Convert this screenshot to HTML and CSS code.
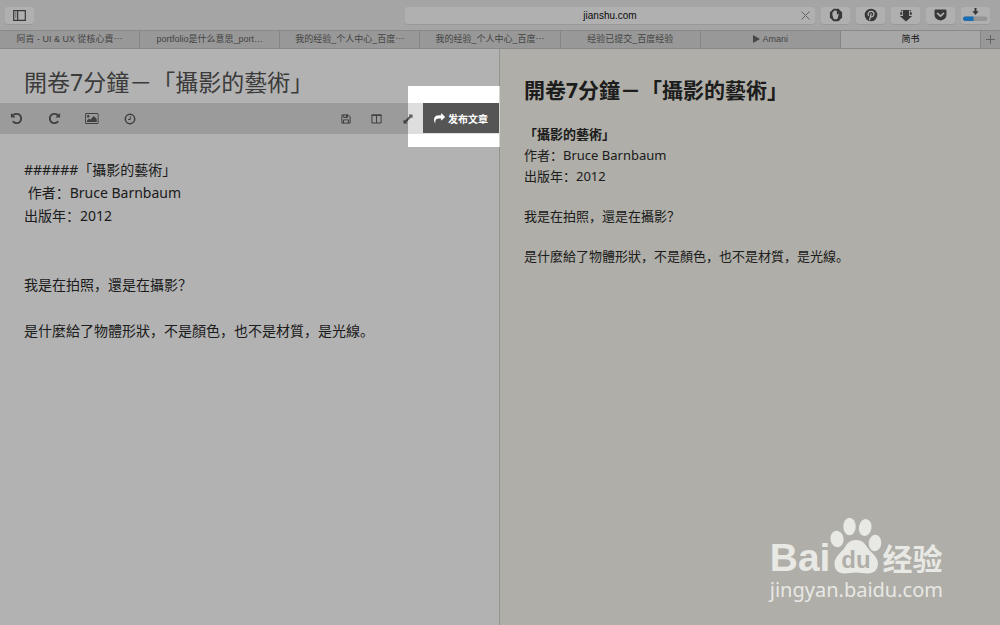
FILE: index.html
```html
<!DOCTYPE html>
<html lang="zh-CN">

<head>
    <meta charset="UTF-8" />
    <meta name="viewport" content="width=device-width, initial-scale=1.0" />
    <title>简书</title>
    <link rel="stylesheet" href="styles.css">
</head>

<body>
    <!-- 浏览器工具栏 -->
    <header class="browser">
        <button class="browser-btn" aria-label="边栏">
            <svg width="13" height="11" viewBox="0 0 13 11" fill="none" stroke="currentColor">
                <path d="M.7.7h11.6v9.6H.7zM4.7.7v9.6" stroke-width="1.2" />
                <path d="M2 3h1.5M2 5h1.5M2 7h1.5" stroke-width=".8" />
            </svg>
        </button>
        <div class="address">
            <input type="text" value="jianshu.com" aria-label="地址">
            <button class="stop" aria-label="停止">
                <svg width="9" height="9" viewBox="0 0 9 9" fill="none" stroke="currentColor">
                    <path d="M.5.5l8 8M8.5.5l-8 8" />
                </svg>
            </button>
        </div>
        <button class="browser-btn" aria-label="AdBlock">
            <svg width="14" height="14" viewBox="0 0 14 14">
                <path d="M4.4.7h5.2l3.5 3.7v5.2l-3.5 3.7H4.4L.9 9.6V4.4z" fill="currentColor" />
                <path d="M4.6 10.8L3.4 7.3V4.4q.6-.6 1 0v1.9V3.2q.6-.7 1.1 0V2.6q.6-.7 1.2 0v.5q.7-.6 1.2.1v3.9l.9-1.2q.8-.4 1 .3L8.7 10.2 7.8 11.2H5.2z" fill="#fdfdfd" />
            </svg>
        </button>
        <button class="browser-btn" aria-label="Pinterest">
            <svg width="14" height="14" viewBox="0 0 14 14" fill="none">
                <circle cx="7" cy="7" r="6.3" fill="currentColor" />
                <path d="M4.7 7.9Q3.3 5.9 4.7 4.4 6.3 2.9 8.5 3.6 10.4 4.6 9.8 6.8 9.1 9 7.6 8.8 6.5 8.6 6.5 8M7.2 5.4L5.5 12.3" stroke="#fdfdfd" stroke-width="1.3" />
            </svg>
        </button>
        <button class="browser-btn" aria-label="下载助手">
            <svg width="14" height="13" viewBox="0 0 14 13" fill="currentColor">
                <path d="M4 1h6v6h3.2L7 12.5.8 7H4z" />
                <path d="M2 1h1.3v1.3H2zM10.7 1H12v1.3h-1.3zM1.2 3.3h2v2.5h-2zM10.8 3.3h2v2.5h-2z" />
            </svg>
        </button>
        <button class="browser-btn" aria-label="Pocket">
            <svg width="13" height="12" viewBox="0 0 13 12">
                <path d="M1.8.5h9.4q1.3 0 1.3 1.3v3.7q0 5-6 6-6-1-6-6V1.8Q.5.5 1.8.5z" fill="currentColor" />
                <path d="M3.5 4.3l3 2.9 3-2.9" fill="none" stroke="#fdfdfd" stroke-width="1.6" stroke-linecap="round" stroke-linejoin="round" />
            </svg>
        </button>
        <button class="browser-btn" aria-label="下载">
            <svg width="25" height="14" viewBox="0 0 25 14">
                <path d="M11.500 0h2v3.300h2.200L12.500 7 9.300 3.300h2.200z" fill="currentColor" />
                <rect x="0" y="8.500" width="24.500" height="4.500" rx="2.200" fill="#d6d6d6" />
                <path d="M2.200 8.500H10.500V13H2.200a2.200 2.200 0 0 1 0-4.500z" fill="#259cff" />
            </svg>
        </button>
    </header>

    <nav class="tabs">
        <a href="#">阿肯 - UI &amp; UX 從核心資⋯</a>
        <a href="#">portfolio是什么意思_port…</a>
        <a href="#">我的经验_个人中心_百度⋯</a>
        <a href="#">我的经验_个人中心_百度⋯</a>
        <a href="#">经验已提交_百度经验</a>
        <a href="#"><span class="play"></span>Amani</a>
        <a href="#" class="current">简书</a>
        <button class="tab-add" aria-label="新标签页">
            <svg width="9" height="9" viewBox="0 0 9 9" stroke="currentColor">
                <path d="M4.5 0v9M0 4.5h9" />
            </svg>
        </button>
    </nav>

    <main class="writer">
        <!-- 左边编辑 -->
        <section class="editor">
            <input class="editor-title" type="text" value="開卷7分鐘－「攝影的藝術」" aria-label="标题">
            <div class="toolbar">
                <div class="tools">
                    <button aria-label="撤销">
                        <svg width="13" height="13" viewBox="0 0 1792 1792" fill="currentColor">
                            <path d="M1664 896q0 156-61 298t-164 245-245 164-298 61q-172 0-327-72.5t-264-204.5q-7-10-6.5-22.5t8.5-20.5l137-138q10-9 25-9 16 2 23 12 73 95 179 147t225 52q104 0 198.5-40.5t163.5-109.5 109.5-163.5 40.5-198.5-40.5-198.5-109.5-163.5-163.5-109.5-198.5-40.5q-98 0-188 35.5t-160 101.5l137 138q31 30 14 69-17 40-59 40h-448q-26 0-45-19t-19-45v-448q0-42 40-59 39-17 69 14l130 129q107-101 244.5-156.5t284.5-55.5q156 0 298 61t245 164 164 245 61 298z" />
                        </svg>
                    </button>
                    <button aria-label="重做">
                        <svg width="13" height="13" viewBox="0 0 1792 1792" fill="currentColor">
                            <path d="M1664 256v448q0 26-19 45t-45 19h-448q-42 0-59-40-17-39 14-69l138-138q-148-137-349-137-104 0-198.5 40.5t-163.5 109.5-109.5 163.5-40.5 198.5 40.5 198.5 109.5 163.5 163.5 109.5 198.5 40.5q119 0 225-52t179-147q7-10 23-12 15 0 25 9l137 138q9 8 9.5 20.5t-7.5 22.5q-109 132-264 204.5t-327 72.5q-156 0-298-61t-245-164-164-245-61-298 61-298 164-245 245-164 298-61q147 0 284.5 55.5t244.5 156.5l130-129q29-31 70-14 39 17 39 59z" />
                        </svg>
                    </button>
                    <button aria-label="图片">
                        <svg width="14" height="13" viewBox="-64 0 1984 1792" fill="currentColor">
                            <path d="M576 576q0 80-56 136t-136 56-136-56-56-136 56-136 136-56 136 56 56 136zm1024 384v448h-1408v-192l320-320 160 160 512-512zm96-704h-1600q-13 0-22.5 9.5t-9.5 22.5v1216q0 13 9.5 22.5t22.5 9.5h1600q13 0 22.5-9.5t9.5-22.5v-1216q0-13-9.5-22.5t-22.5-9.5zm160 32v1216q0 66-47 113t-113 47h-1600q-66 0-113-47t-47-113v-1216q0-66 47-113t113-47h1600q66 0 113 47t47 113z" />
                        </svg>
                    </button>
                    <button aria-label="历史版本">
                        <svg width="12" height="12" viewBox="0 0 12 12" fill="none" stroke="currentColor">
                            <circle cx="6" cy="6" r="4.7" stroke-width="1.5" />
                            <path d="M6.3 3.3v3.2H4" />
                        </svg>
                    </button>
                </div>
                <div class="tools-right">
                    <button aria-label="保存">
                        <svg width="10" height="10" viewBox="0 0 10 10" fill="none" stroke="currentColor">
                            <path d="M.9.9h6.3l1.9 1.9v6.3H.9zM2.7 1v2.5h3.8V1M2.5 9V5.900h5V9" />
                            <path d="M5.5 1v2" />
                        </svg>
                    </button>
                    <button aria-label="预览模式">
                        <svg width="11" height="10" viewBox="0 0 11 10" fill="none" stroke="currentColor">
                            <path d="M.9 1h9.2v8H.9zM5.5 1v8" />
                            <path d="M.5 1.2h10" stroke-width="1.4" />
                        </svg>
                    </button>
                    <button aria-label="全屏">
                        <svg width="10" height="10" viewBox="0 0 10 10" fill="currentColor">
                            <path d="M5.5.5h4v4L8.300 3.300 3.300 8.300 4.500 9.500h-4v-4L1.700 6.700 6.700 1.700z" />
                        </svg>
                    </button>
                </div>
                <div class="publish">
                    <button class="publish-btn">
                        <svg width="11" height="11" viewBox="0 0 1792 1792" fill="currentColor">
                            <path d="M1792 640q0 26-19 45l-512 512q-19 19-45 19t-45-19-19-45v-256h-224q-98 0-175.5 6t-154 21.5-133 42.5-105.5 69.5-80 101-48.5 138.5-17.5 181q0 55 5 123 0 6 2.5 23.5t2.5 26.5q0 15-8.5 25t-23.5 10q-16 0-28-17-7-9-13-22t-13.5-30-10.5-24q-127-285-127-451 0-199 53-333 162-403 875-403h224v-256q0-26 19-45t45-19 45 19l512 512q19 19 19 45z" />
                        </svg>
                        发布文章
                    </button>
                    <!-- 高亮发布按钮，其余部分变暗 -->
                    <div class="spotlight"></div>
                </div>
            </div>
            <textarea class="editor-text" aria-label="正文" spellcheck="false">######「攝影的藝術」
 作者：Bruce Barnbaum
出版年：2012


我是在拍照，還是在攝影？

是什麼給了物體形狀，不是顏色，也不是材質，是光線。</textarea>
        </section>

        <!-- 右边预览 -->
        <article class="preview">
            <h1>開卷7分鐘－「攝影的藝術」</h1>
            <h6>「攝影的藝術」</h6>
            <p>作者：Bruce Barnbaum<br>出版年：2012</p>
            <p>我是在拍照，還是在攝影？</p>
            <p>是什麼給了物體形狀，不是顏色，也不是材質，是光線。</p>
        </article>
    </main>

    <div class="watermark">
        <div class="watermark-logo">
            <span class="bai">Bai</span>
            <svg width="52" height="58" viewBox="0 0 52 58" fill="currentColor">
                <ellipse cx="7" cy="22" rx="6.5" ry="8.3" transform="rotate(-8 7 22)" />
                <ellipse cx="19.5" cy="9.5" rx="6.2" ry="8.8" />
                <ellipse cx="35.2" cy="10.5" rx="6.3" ry="8.5" transform="rotate(10 35.2 10.5)" />
                <ellipse cx="45" cy="26" rx="6.3" ry="8.2" transform="rotate(4 45 26)" />
                <path d="M26 23c5 0 8.5 2.500 11 7 2.500 4.500 11 9 11 16.500 0 6.500-4.500 10-10 10-5 0-8-1-12-1s-7 1-12 1c-5.500 0-9.500-3.500-9.500-10C4.500 39 12.500 34.500 15 30c2.500-4.500 6-7 11-7z" />
                <text class="du" x="26" y="51" text-anchor="middle">du</text>
            </svg>
            <span class="jingyan">经验</span>
        </div>
        <div class="watermark-url">jingyan.baidu.com</div>
    </div>
</body>

</html>
```

FILE: styles.css
```css
* {
    margin: 0;
    padding: 0;
    box-sizing: border-box;
}

body {
    display: flex;
    flex-direction: column;
    position: relative;
    min-height: 100vh;
    overflow: hidden;
    background-color: #fff;
    color: #2a2a2a;
    font-family: "Noto Sans", "Noto Sans CJK SC", sans-serif;
}

button,
input,
textarea {
    border: none;
    outline: none;
    background: none;
    color: inherit;
    font-family: inherit;
}

button {
    display: flex;
    align-items: center;
    justify-content: center;
}

/* 浏览器 */
.browser {
    display: flex;
    align-items: center;
    gap: 6px;
    height: 30px;
    padding: 0 10px 0 5px;
    background-color: #ececec;
}

.browser-btn {
    width: 29px;
    height: 17px;
    border-radius: 3px;
    background-color: #fdfdfd;
    box-shadow: 0 1px 0 #dcdcdc;
    color: #505050;
}

.address {
    display: flex;
    align-items: center;
    width: 41vw;
    height: 17px;
    margin-left: auto;
    border-radius: 3px;
    background-color: #fdfdfd;
    box-shadow: 0 1px 0 #dcdcdc;
}

.address input {
    flex: 1;
    min-width: 0;
    padding-left: 20px;
    color: #111;
    font-family: "Liberation Sans", sans-serif;
    font-size: 10px;
    text-align: center;
}

.stop {
    width: 20px;
    color: #8c8c8c;
}

.tabs {
    display: flex;
    height: 19px;
    border-top: 1px solid #c4c4c4;
    border-bottom: 1px solid #c4c4c4;
    background-color: #dadada;
}

.tabs a {
    flex: 1;
    min-width: 0;
    border-right: 1px solid #c0c0c0;
    color: #626262;
    font-family: "Liberation Sans", "Noto Sans CJK SC", sans-serif;
    font-size: 9px;
    line-height: 17px;
    text-align: center;
    text-decoration: none;
    white-space: nowrap;
}

.tabs .current {
    background-color: #efefef;
    color: #222;
}

.play {
    display: inline-block;
    margin-right: 3px;
    border: 4px solid transparent;
    border-right: none;
    border-left: 7px solid #666;
    vertical-align: -1px;
}

.tab-add {
    width: 19px;
    color: #8c8c8c;
}

/* 写作区 */
.writer {
    display: flex;
    flex: 1;
}

.editor {
    display: flex;
    flex-direction: column;
    width: 50%;
    border-right: 1px solid #d4d4d0;
}

.editor-title {
    width: 100%;
    height: 54px;
    padding: 10px 24px 0;
    color: #555;
    font-size: 23px;
}

.toolbar {
    display: flex;
    height: 31px;
    background-color: #dedede;
    color: #5c5c5c;
}

.tools {
    display: flex;
    flex: 1;
    gap: 14px;
    padding-left: 4px;
}

.tools button {
    width: 24px;
}

.tools-right {
    display: flex;
}

.tools-right button {
    width: 31px;
}

.publish {
    position: relative;
}

.publish-btn {
    gap: 3px;
    width: 76px;
    height: 30px;
    background-color: #555;
    color: #fff;
    font-size: 10px;
    font-weight: bold;
}

.spotlight {
    position: absolute;
    z-index: 1;
    top: -17px;
    right: -1px;
    bottom: -13px;
    left: -15px;
    box-shadow: 0 0 0 3000px rgba(0, 0, 0, 0.3);
    pointer-events: none;
}

.editor-text {
    flex: 1;
    width: 100%;
    padding: 24px;
    font-size: 14px;
    line-height: 23px;
    resize: none;
}

.preview {
    width: 50%;
    padding: 26px 24px;
    background-color: #fbfaf1;
    font-size: 13px;
    line-height: 21px;
}

.preview h1 {
    margin-bottom: 19px;
    font-size: 21px;
    line-height: 30px;
}

.preview h6 {
    font-size: 13px;
}

.preview p {
    margin-bottom: 19px;
}

/* 水印 */
.watermark {
    position: absolute;
    z-index: 2;
    right: 57px;
    bottom: 22px;
    color: #e8e8e5;
}

.watermark-logo {
    display: flex;
    align-items: flex-end;
    height: 60px;
}

.watermark-logo svg {
    margin-bottom: 2px;
}

.bai {
    font-family: "Liberation Sans", sans-serif;
    font-size: 39px;
    font-weight: bold;
    line-height: 38px;
}

.jingyan {
    font-size: 30px;
    font-weight: bold;
    line-height: 36px;
}

.du {
    fill: #b0afa9;
    font-family: "Liberation Sans", sans-serif;
    font-size: 24px;
    font-weight: bold;
}

.watermark-url {
    font-size: 20px;
    line-height: 26px;
}
```
